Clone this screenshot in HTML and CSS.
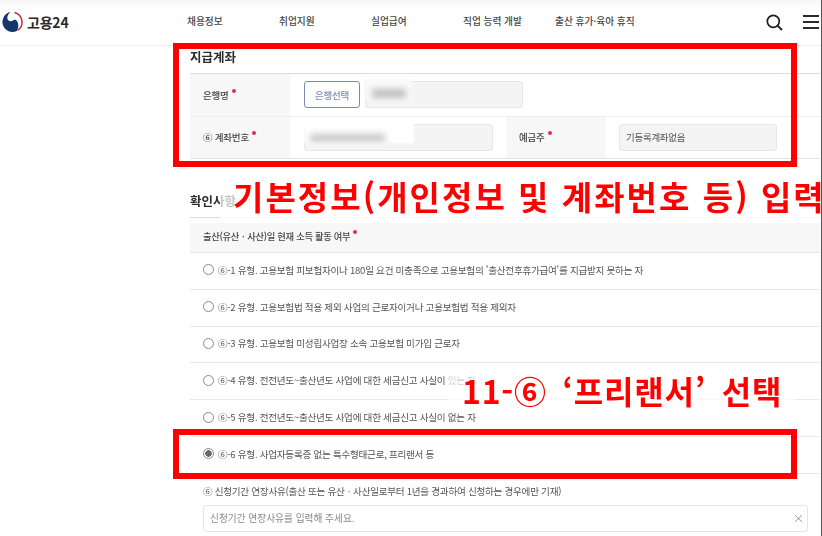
FILE: index.html
```html
<!DOCTYPE html>
<html lang="ko">
<head>
<meta charset="utf-8">
<title>고용24</title>
<link rel="stylesheet" href="styles.css">
</head>
<body>
<div class="page">
  <div class="soft">
    <header class="top">
      <a class="brand">
        <svg class="logo" viewBox="0 0 22 22" width="22" height="22" aria-hidden="true">
          <path d="M13.5 1.4 A10 10 0 0 1 16.5 19.4" fill="none" stroke="#c8283e" stroke-width="1.5"/>
          <path d="M9.5 1.1 A10 10 0 1 0 15.8 19.9 Q18 16 17 12.5 C16.4 9 14.4 8 12.6 9 C10.6 10.8 8 10.8 6.7 8.6 C5.6 6.2 6.8 3.2 9.5 1.1Z" fill="#12376a"/>
        </svg>
        <span class="brand-name">고용24</span>
      </a>
      <nav class="menu">
        <span>채용정보</span>
        <span>취업지원</span>
        <span>실업급여</span>
        <span>직업 능력 개발</span>
        <span>출산 휴가·육아 휴직</span>
      </nav>
      <div class="tools">
        <svg class="search" viewBox="0 0 17 17" width="17" height="17" aria-hidden="true">
          <circle cx="7.3" cy="7.3" r="6" fill="none" stroke="#1c1c1c" stroke-width="1.7"/>
          <path d="M11.6 11.6 L16 16" stroke="#1c1c1c" stroke-width="1.9"/>
        </svg>
        <div class="burger"><i></i><i></i><i></i></div>
      </div>
    </header>

    <main class="content">
      <section class="account">
        <h2 class="title">지급계좌</h2>
        <div class="row row-bank">
          <div class="label">은행명<b class="req"></b></div>
          <div class="cell">
            <button class="pick">은행선택</button>
            <div class="field w158"></div>
          </div>
        </div>
        <div class="row row-number">
          <div class="label">⑥ 계좌번호<b class="req"></b></div>
          <div class="cell"><div class="field w189"></div></div>
          <div class="label">예금주<b class="req"></b></div>
          <div class="cell tight"><div class="field w158 filled">기등록계좌없음</div></div>
        </div>
      </section>

      <section class="confirm">
        <h2 class="title second">확인사항</h2>
        <div class="q-head">출산(유산ㆍ사산)일 현재 소득 활동 여부<b class="req"></b></div>
        <div class="opt"><span class="radio"></span><span>⑥-1 유형. 고용보험 피보험자이나 180일 요건 미충족으로 고용보험의 '출산전후휴가급여'를 지급받지 못하는 자</span></div>
        <div class="opt"><span class="radio"></span><span>⑥-2 유형. 고용보험법 적용 제외 사업의 근로자이거나 고용보험법 적용 제외자</span></div>
        <div class="opt"><span class="radio"></span><span>⑥-3 유형. 고용보험 미성립사업장 소속 고용보험 미가입 근로자</span></div>
        <div class="opt"><span class="radio"></span><span>⑥-4 유형. 전전년도~출산년도 사업에 대한 세금신고 사실이 있는 자</span></div>
        <div class="opt"><span class="radio"></span><span>⑥-5 유형. 전전년도~출산년도 사업에 대한 세금신고 사실이 없는 자</span></div>
        <div class="opt"><span class="radio on"></span><span>⑥-6 유형. 사업자등록증 없는 특수형태근로, 프리랜서 등</span></div>
        <p class="reason">⑥ 신청기간 연장사유(출산 또는 유산ㆍ사산일로부터 1년을 경과하여 신청하는 경우에만 기재)</p>
        <div class="reason-input"><span>신청기간 연장사유를 입력해 주세요.</span><span class="x">×</span></div>
      </section>
    </main>
  </div>

  <div class="mask mask-a"><i></i></div>
  <div class="mask mask-b"><i></i></div>
  <div class="redbox box-a"></div>
  <div class="redbox box-b"></div>
  <div class="note note-a">기본정보(개인정보 및 계좌번호 등) 입력</div>
  <div class="note note-b">11-⑥ ‘프리랜서’ 선택</div>
</div>
</body>
</html>
```
FILE: styles.css
```css
* { box-sizing: border-box; }
html, body { margin: 0; padding: 0; background: #fff; }
body { font-family: "Noto Sans CJK KR", "Noto Sans", sans-serif; color: #444; }
.page { position: relative; width: 822px; height: 536px; overflow: hidden; border-right: 1px solid #555; }
.soft { filter: blur(0.35px); }

.top { display: flex; align-items: center; height: 46px; padding: 0 2px 1px 1px; border-bottom: 1px solid #eee; background: linear-gradient(#f7f7f7, #fff 9px); }
.brand { display: flex; align-items: center; gap: 4px; width: 186px; }
.logo { flex: none; }
.brand-name { font-size: 14px; font-weight: 700; color: #2b2b2b; letter-spacing: -0.2px; }
.menu { display: grid; grid-template-columns: repeat(4, 92px) auto; flex: 1; margin-bottom: 2px; font-size: 9.7px; font-weight: 500; color: #444; }
.menu span { white-space: nowrap; }
.tools { display: flex; align-items: center; gap: 20px; }
.search { display: block; }
.burger { display: flex; flex-direction: column; gap: 4px; width: 16px; }
.burger i { display: block; height: 2px; background: #2a2a2a; }

.content { padding-left: 190px; padding-right: 1px; }
.title { margin: 0; height: 28px; font-size: 12.5px; line-height: 22px; font-weight: 700; color: #2c2c2c; border-bottom: 1px solid #ddd; }
.row { display: grid; border-bottom: 1px solid #eee; }
.row-bank { grid-template-columns: 100px 1fr; height: 43px; }
.row-number { grid-template-columns: 100px 216px 100px 1fr; height: 42px; border-bottom-color: #e4e4e4; }
.row-number .label { padding-bottom: 1px; }
.row-bank .cell { padding-bottom: 1px; }
.label { display: flex; align-items: center; padding-left: 13px; background: #f7f7f7; font-size: 9.5px; letter-spacing: -0.2px; font-weight: 500; color: #444; }
.cell { display: flex; align-items: center; gap: 5px; padding-left: 14px; }
.cell.tight { padding-left: 13px; }
.req { display: inline-block; width: 4px; height: 4px; margin: -8px 0 0 3px; border-radius: 50%; background: #e5265f; }
.pick { width: 56px; height: 27px; padding: 0; border: 1px solid #7c88b8; border-radius: 3px; background: #fff; font: 500 9.5px "Noto Sans CJK KR", sans-serif; letter-spacing: -0.2px; color: #7f8ac0; }
.field { height: 27px; border: 1px solid #e6e6e6; border-radius: 3px; background: #f4f4f4; font-size: 9.5px; letter-spacing: -0.28px; line-height: 25px; padding-left: 6px; color: #555; }
.w158 { width: 158px; }
.w189 { width: 189px; }

.confirm { margin-top: 26px; }
.title.second { height: 33px; line-height: 32px; border-bottom: 1px solid #ddd; margin-bottom: 5px; }
.q-head { display: flex; align-items: center; height: 30px; padding: 0 0 3px 13px; background: #f7f7f7; border-bottom: 1px solid #e4e4e4; font-size: 9.3px; letter-spacing: -0.3px; font-weight: 500; color: #444; }
.opt { display: flex; align-items: center; gap: 4px; height: 36.8px; padding: 0 0 2px 13px; border-bottom: 1px solid #eaeaea; font-size: 9.6px; letter-spacing: -0.28px; color: #555; white-space: nowrap; }
.radio { flex: none; width: 11px; height: 11px; border: 1px solid #888; border-radius: 50%; background: #fff; }
.radio.on { background: radial-gradient(circle, #666 0 3px, #fff 3.5px); }
.reason { margin: 0; height: 31.5px; padding: 10px 0 0 13px; font-size: 9.6px; letter-spacing: -0.28px; line-height: 14px; color: #555; white-space: nowrap; }
.reason-input { display: flex; justify-content: space-between; align-items: center; width: 605px; height: 27px; margin-left: 13px; padding: 0 3px 2px 6px; border: 1px solid #e6e6e6; border-radius: 3px; font-size: 9.7px; color: #888; }
.x { font-size: 11px; color: #999; }

.mask { position: absolute; background: #fff; overflow: hidden; filter: blur(1px); }
.mask i { position: absolute; display: block; background: #bdbdbd; filter: blur(3px); }
.mask-a { left: 365px; top: 79px; width: 47px; height: 22px; background: #fafafa; }
.mask-a i { left: 7px; top: 10px; width: 34px; height: 9px; }
.mask-b { left: 304px; top: 121px; width: 110px; height: 22px; }
.mask-b i { left: 6px; top: 13px; width: 75px; height: 8px; background: #c6c6c6; }

.redbox { position: absolute; border: 6px solid #f00; }
.box-a { left: 173px; top: 43px; width: 624px; height: 124px; }
.box-b { left: 173px; top: 429px; width: 624px; height: 50px; }

.note { position: absolute; color: #f00; font-weight: 700; white-space: nowrap; line-height: 1; background: rgba(255, 255, 255, 0.72); }
.note-a { left: 220px; top: 178px; padding: 2px 0 5px 13px; font-size: 33px; letter-spacing: 2.05px; }
.note-b { left: 448px; top: 367px; padding: 7px 13px 2px 14px; font-size: 32px; letter-spacing: 0.8px; word-spacing: 6px; }
```
